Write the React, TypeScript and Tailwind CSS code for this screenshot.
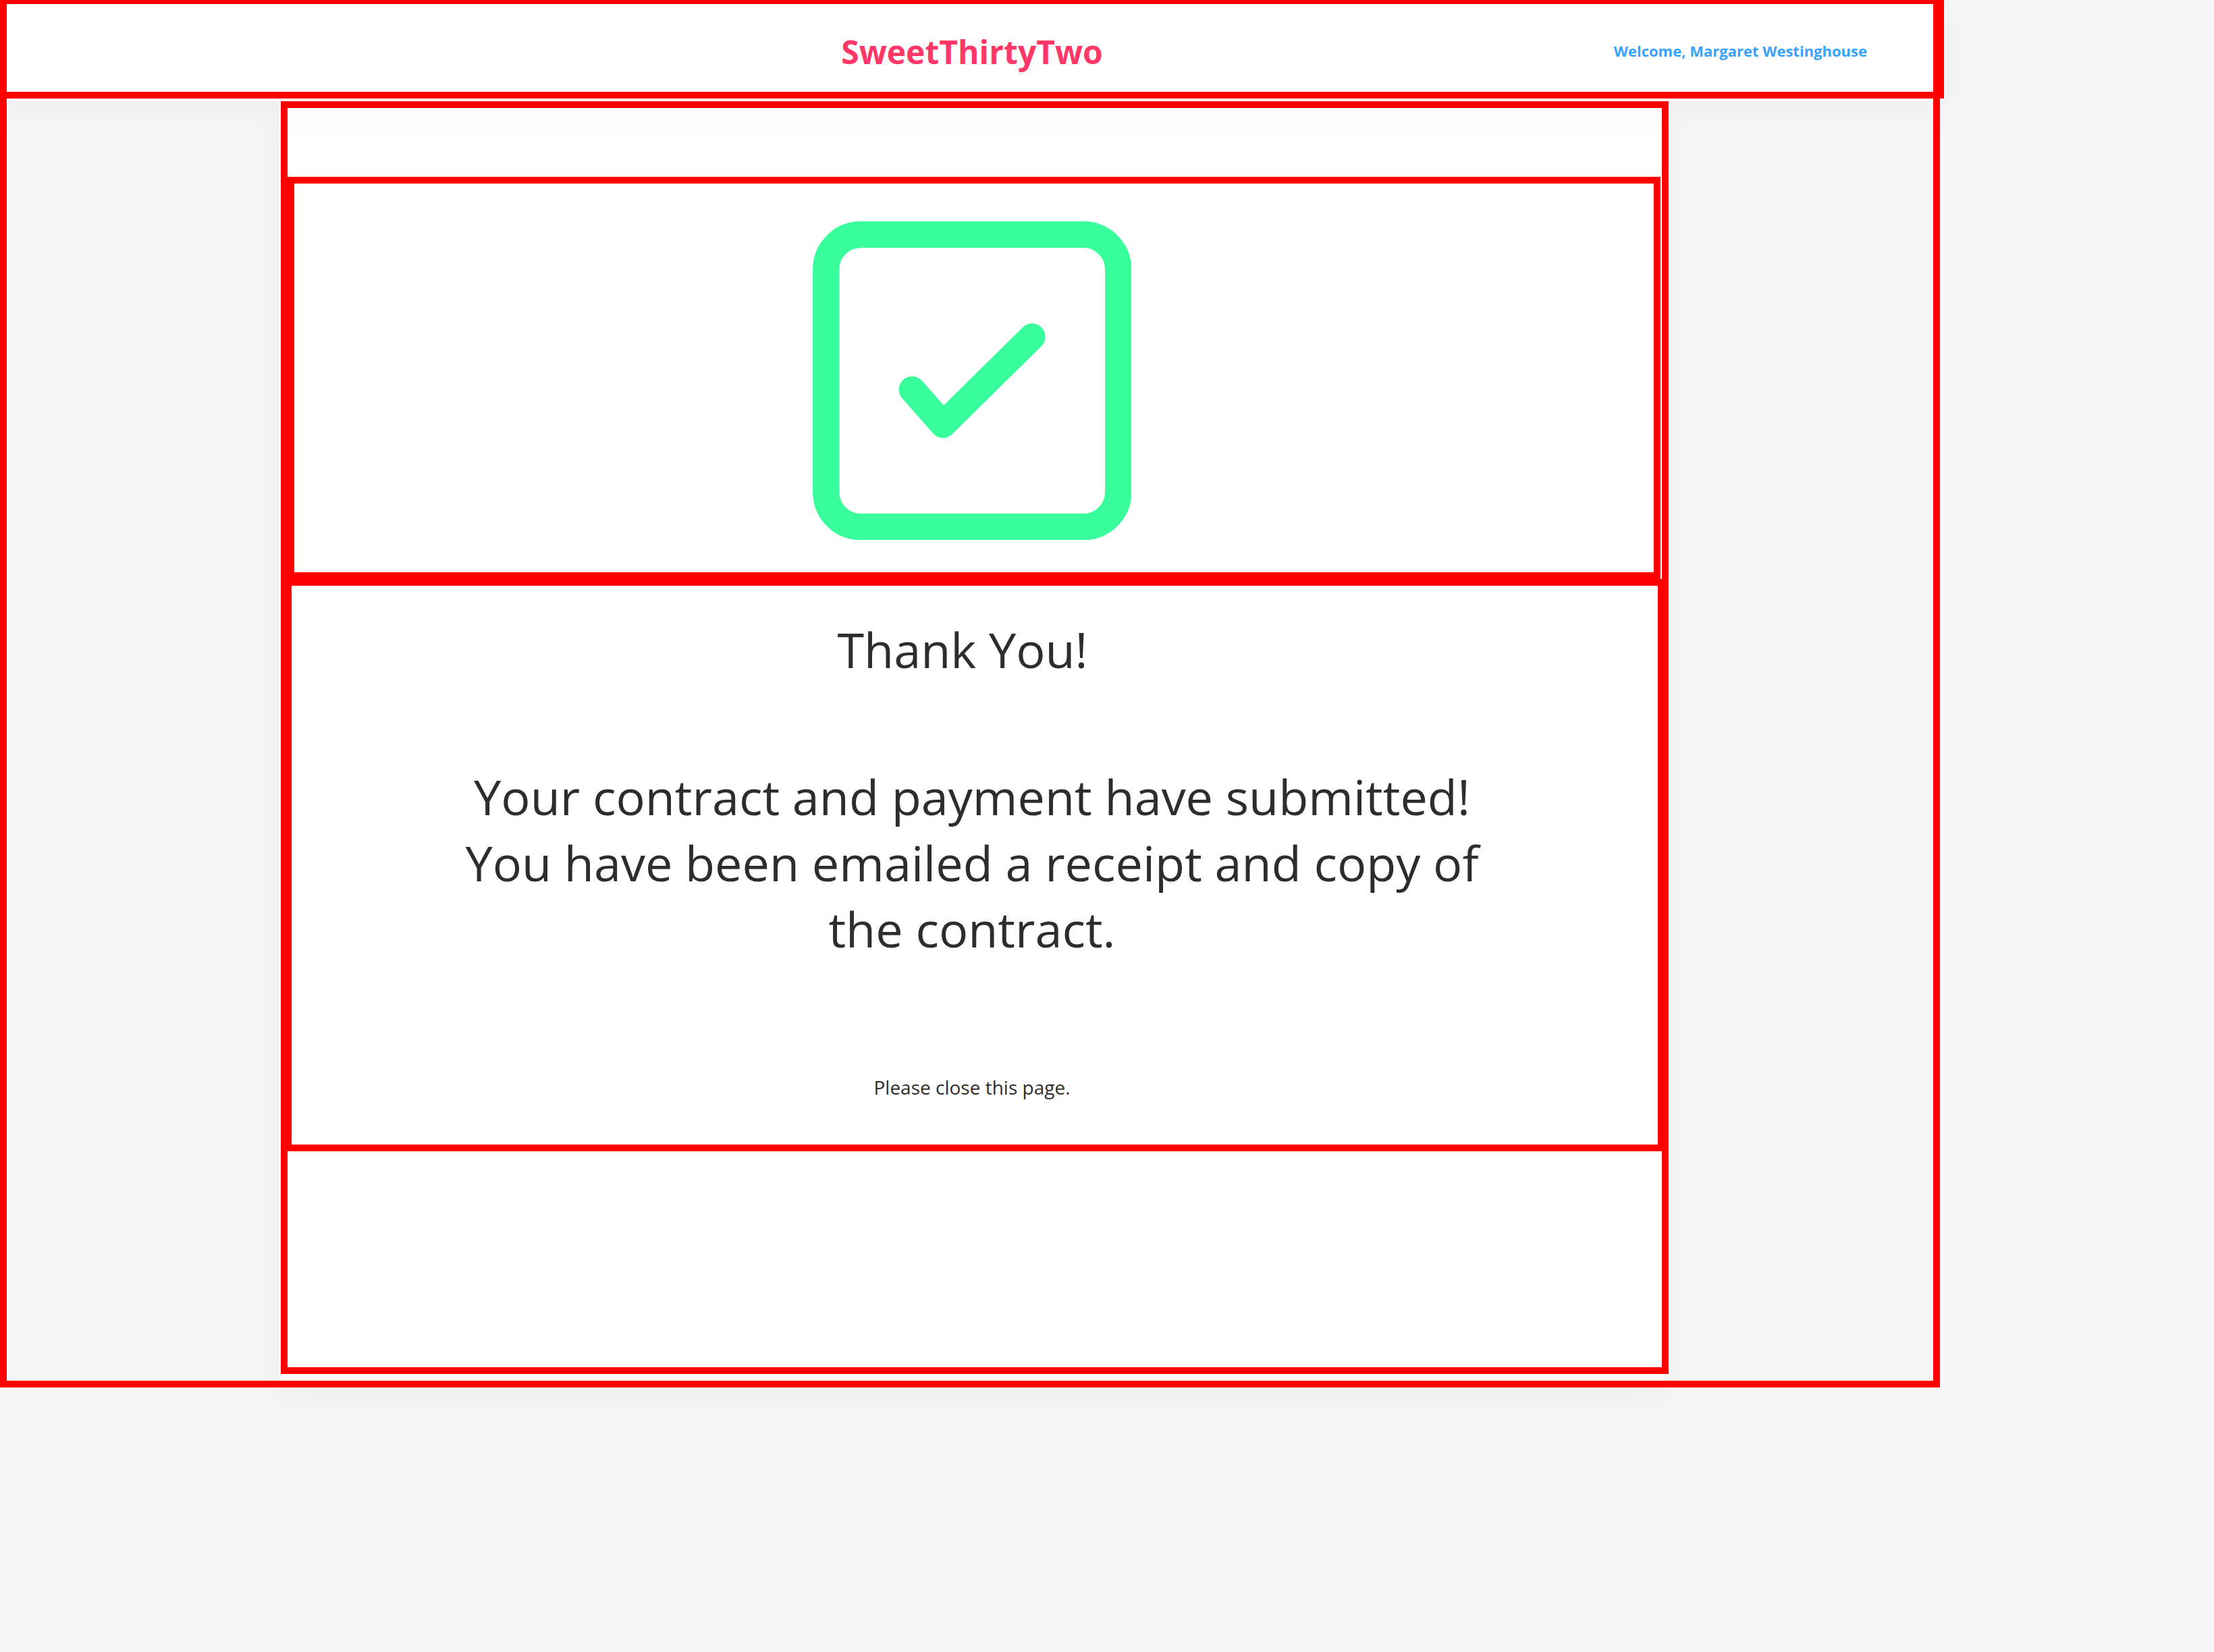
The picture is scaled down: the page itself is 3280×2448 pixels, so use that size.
import type { ReactNode } from "react";

function CheckIcon() {
  return (
    <svg
      viewBox="0 0 472 472"
      className="size-[472px] max-w-full"
      fill="none"
      stroke="#38ff9c"
      strokeWidth="39.3"
      strokeLinecap="round"
      strokeLinejoin="round"
      role="img"
      aria-label="Completed"
    >
      <rect x="19.7" y="19.7" width="433" height="433" rx="51.5" />
      <path d="M147.3 249.3 193 301.3 325 171" />
    </svg>
  );
}

function Header() {
  return (
    <header className="relative z-10 bg-white shadow-[0_12px_50px_rgba(0,0,0,0.045)]">
      <div className="grid h-[146px] grid-cols-[1fr_auto_1fr] items-start border-10 border-t-6 border-[#ff0000] pt-[38px]">
        <h1 className="col-start-2 text-[48px] leading-[66px] font-bold text-[#ff3868]">SweetThirtyTwo</h1>
        <a href="#account" className="justify-self-end pt-4 pr-[104px] text-[22px] leading-[30px] font-bold text-[#38a2ff]">
          Welcome, Margaret Westinghouse
        </a>
      </div>
      <div className="h-1" />
    </header>
  );
}

function Card({ children }: { children: ReactNode }) {
  return (
    <main className="mx-auto w-full max-w-[2052px] bg-white pb-5 pl-0.5 shadow-[0_12px_50px_rgba(0,0,0,0.045)]">
      <div className="-mr-1.5 border-10 border-[#ff0000] pt-[102px] pb-80">{children}</div>
    </main>
  );
}

export default function App() {
  return (
    <div className="min-h-screen bg-[#f6f6f6] font-['Open_Sans',sans-serif] text-[#2d2d2d]">
      <div className="relative w-full max-w-[2880px]">
        <Header />
        <Card>
          <section className="mr-0.5 flex justify-center border-10 border-[#ff0000] pt-14 pr-1.5 pb-12">
            <CheckIcon />
          </section>
          <section className="-mx-1 border-10 border-[#ff0000] pt-[45px] pr-2 pb-[66px] text-center">
            <h2 className="pr-7 text-[72px] leading-[98px]">Thank You!</h2>
            <p className="mx-auto mt-[120px] max-w-[1540px] text-[72px] leading-[98px]">
              Your contract and payment have submitted!
              <br />
              You have been emailed a receipt and copy of the contract.
            </p>
            <p className="mt-[167px] text-[28px] leading-[38px]">Please close this page.</p>
          </section>
        </Card>
        <div className="pointer-events-none absolute inset-y-0 right-1.5 left-0 z-20 border-10 border-t-6 border-[#ff0000]" />
      </div>
    </div>
  );
}
